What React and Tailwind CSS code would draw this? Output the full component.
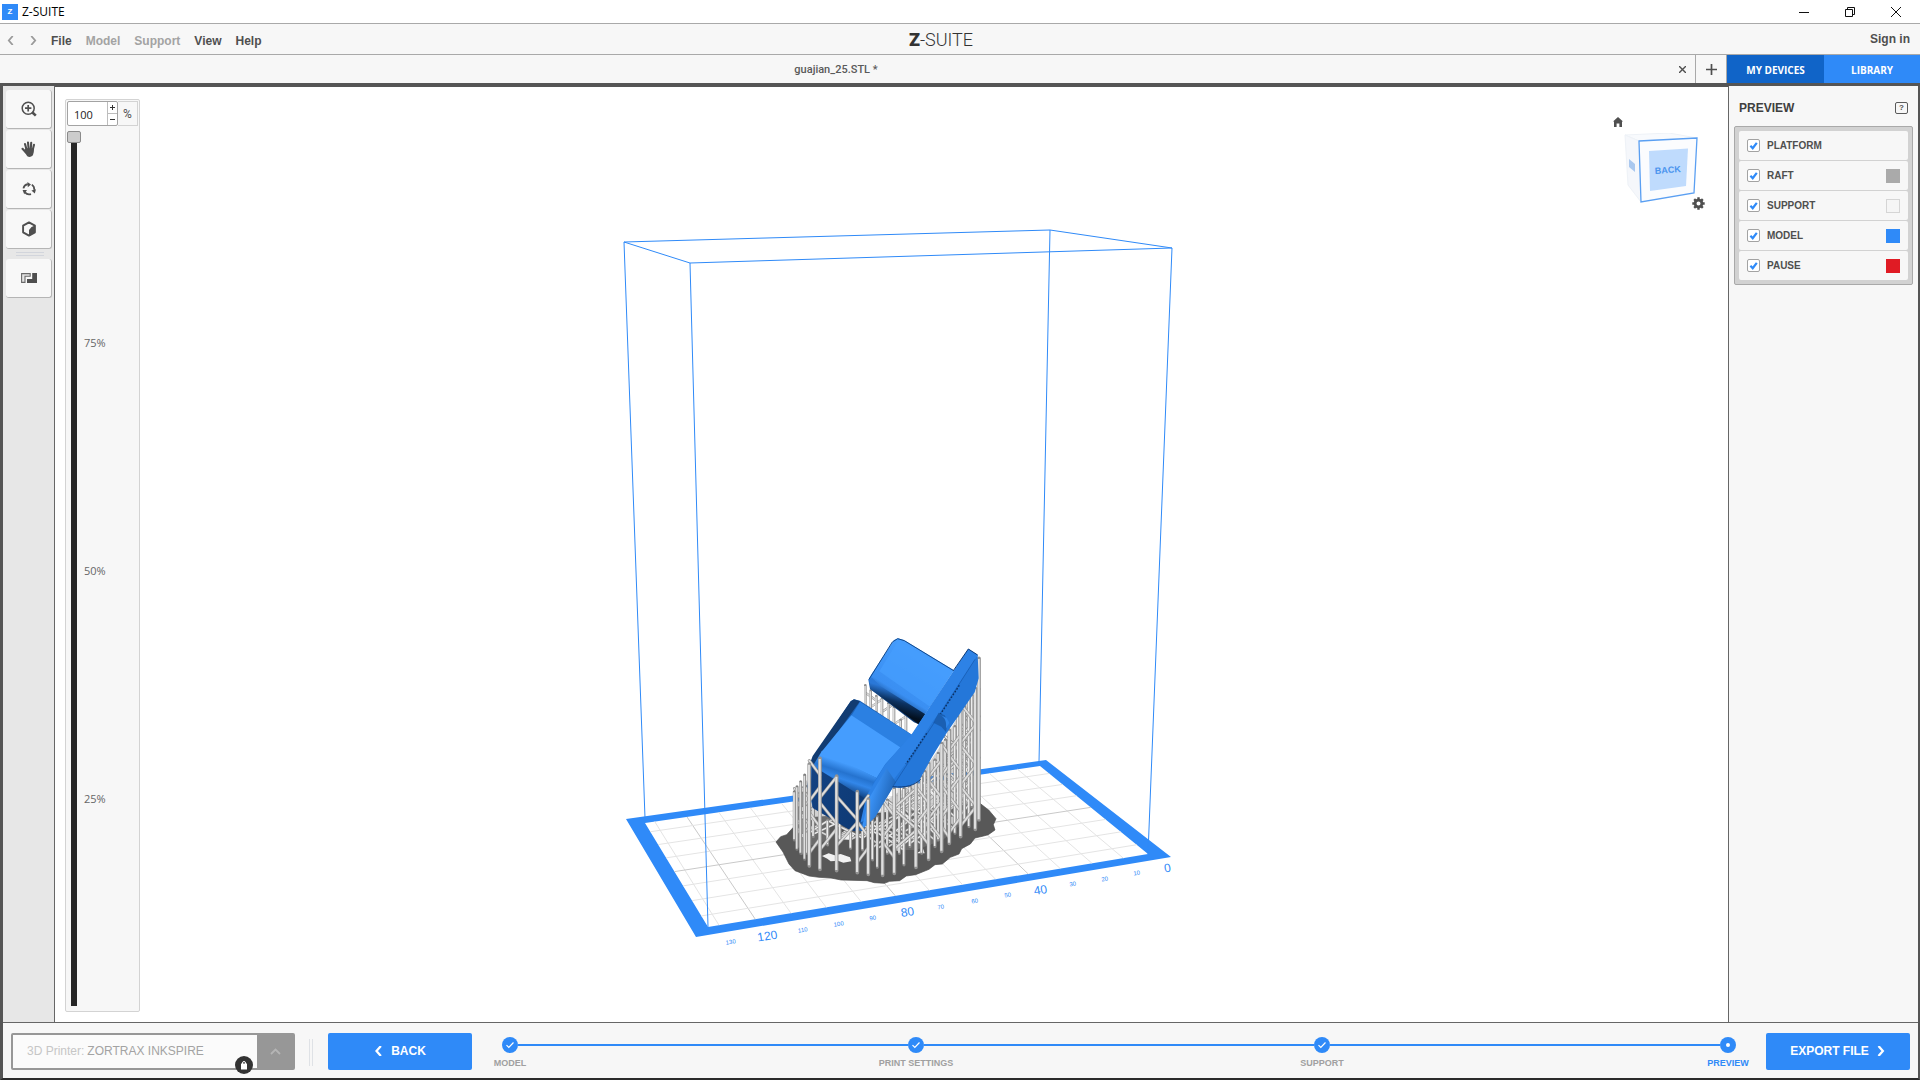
import { useState } from 'react';

const layers = [
  { name: 'PLATFORM', swatch: null },
  { name: 'RAFT', swatch: 'bg-[#aaaaaa] border-[#aaaaaa]' },
  { name: 'SUPPORT', swatch: 'bg-[#f5f5f5] border-[#d5d5d5]' },
  { name: 'MODEL', swatch: 'bg-[#2f8af8] border-[#2f8af8]' },
  { name: 'PAUSE', swatch: 'bg-[#e01b24] border-[#e01b24]' },
];

const steps = ['MODEL', 'PRINT SETTINGS', 'SUPPORT', 'PREVIEW'];

/* ---------- Icons ---------- */

function ZoomIcon() {
  return (
    <svg width="16" height="16" viewBox="0 0 16 16" fill="none" stroke="#4f4f4f">
      <circle cx="7.2" cy="7.2" r="6" strokeWidth="1.5" />
      <path d="M4 7.2h6.4M7.2 4v6.4" strokeWidth="1.7" />
      <path d="M11.2 11.2l3.6 3.4" strokeWidth="2.6" />
    </svg>
  );
}

function HandIcon() {
  return (
    <svg
      width="16"
      height="16"
      viewBox="0 0 16 16"
      fill="none"
      stroke="#4f4f4f"
      strokeLinecap="round"
    >
      <path
        d="M5.4 8L4 3M7.6 7.5L7 1.5M9.8 7.5l.4-5.8M11.8 8.5l1.2-4.8M5 11.5L1.5 7.8"
        strokeWidth="2.1"
      />
      <path
        d="M4.5 7.2h8.4c.2 3-.2 5-1.4 7.6-1.5 1.4-3.8 1.4-5.2.4L2.8 10z"
        fill="#4f4f4f"
        stroke="none"
      />
    </svg>
  );
}

function RotateIcon() {
  return (
    <svg width="14" height="14" viewBox="0 0 14 14" fill="none">
      <g stroke="#4f4f4f" strokeWidth="1.7">
        <path d="M1.4 6.4A5.4 5.4 0 0 1 5.8 2.2" />
        <path d="M9.8 2.6a5.4 5.4 0 0 1 2.4 5.2" />
        <path d="M9 12.1a5.4 5.4 0 0 1-6-1.7" />
      </g>
      <path
        d="M5.4 0l3.6 2.4-3.2 2.8zM14 7.2l-1.2 4.4-3.4-3zM.6 8h4.4L2.2 12.2z"
        fill="#4f4f4f"
      />
    </svg>
  );
}

function CubeIcon() {
  return (
    <svg width="16" height="16" viewBox="0 0 16 16">
      <path
        d="M8 1.4l5.9 3.3v6.6L8 14.6l-5.9-3.3V4.7z"
        fill="none"
        stroke="#4f4f4f"
        strokeWidth="1.9"
        strokeLinejoin="round"
      />
      <path d="M8 9l2.500-3L14 4.600v6.800L8 14.800z" fill="#4f4f4f" />
    </svg>
  );
}

function OutlineIcon() {
  return (
    <svg width="16" height="10" viewBox="0 0 16 10">
      <path
        d="M.6.600h8.600v2.600H4v6.200H.6z"
        fill="#e4e4e4"
        stroke="#6a6a6a"
        strokeWidth="1.100"
      />
      <path d="M16 0v10H6V6h5.200V0z" fill="#4f4f4f" />
    </svg>
  );
}

function Chevron({ d, size = 8, width = 2, color = 'currentColor' }) {
  return (
    <svg width={size} height={size} viewBox="0 0 8 8" fill="none">
      <path d={d} stroke={color} strokeWidth={width} />
    </svg>
  );
}

/* ---------- Header ---------- */

function TitleBar() {
  return (
    <div className="flex h-6 shrink-0 items-center border-b border-[#a9a9a9] bg-white pr-px">
      <span className="ml-[2px] flex h-4 w-4 items-center justify-center bg-[#2f8af8] text-[8px] font-bold text-white">
        Z
      </span>
      <span className="ml-1 flex-1 font-['Open_Sans',sans-serif] text-[12px] leading-4 text-black">
        Z-SUITE
      </span>
      <button aria-label="Minimize" className="flex h-5 w-[46px] items-center justify-center">
        <svg width="10" height="10" stroke="#111">
          <path d="M0 5.5h10" />
        </svg>
      </button>
      <button aria-label="Restore" className="flex h-5 w-[46px] items-center justify-center">
        <svg width="10" height="10" fill="none" stroke="#111">
          <path d="M.5 2.5h7v7h-7zM2.5 2.5v-2h7v7h-2" />
        </svg>
      </button>
      <button aria-label="Close" className="flex h-5 w-[46px] items-center justify-center">
        <svg width="10" height="10" fill="none" stroke="#111">
          <path d="M0 0l10 10M10 0L0 10" />
        </svg>
      </button>
    </div>
  );
}

function MenuBar() {
  return (
    <div className="grid h-[31px] shrink-0 grid-cols-[1fr_auto_1fr] items-center border-b border-[#a9a9a9] bg-[#f7f7f7] pr-[38px] font-bold text-[#4f4f4f]">
      <nav className="flex items-center gap-[14px] pt-[3px] pl-[6px]">
        <button aria-label="Undo">
          <Chevron d="M6 0L2.5 4L6 8" color="#9a9a9a" size={9} width={1.6} />
        </button>
        <button aria-label="Redo" className="-mr-px">
          <Chevron d="M2 0l3.5 4L2 8" color="#9a9a9a" size={9} width={1.6} />
        </button>
        <button>File</button>
        <button className="text-[#a3a3a3]" disabled>
          Model
        </button>
        <button className="text-[#a3a3a3]" disabled>
          Support
        </button>
        <button>View</button>
        <button>Help</button>
      </nav>
      <div className="flex items-center pt-px font-['Roboto',sans-serif] text-[18px] leading-5 text-[#333]">
        <span className="font-black">Z</span>
        <span className="font-light">-SUITE</span>
      </div>
      <a href="#signin" className="-mr-7 justify-self-end">
        Sign in
      </a>
    </div>
  );
}

function TabBar() {
  return (
    <div className="flex h-7 shrink-0 bg-[#f7f7f7]">
      <div className="flex flex-1 items-center">
        <button className="flex-1 pt-px pl-[3px] font-['Roboto',sans-serif] text-[11px] font-medium text-[#5a5a5a]">
          guajian_25.STL *
        </button>
        <button aria-label="Close tab" className="flex w-[26px] justify-center">
          <svg width="7" height="7" viewBox="0 0 7 7" stroke="#4f4f4f" strokeWidth="1.4">
            <path d="M0 0l7 7M7 0L0 7" />
          </svg>
        </button>
      </div>
      <button
        aria-label="New tab"
        className="flex w-8 items-center justify-center border-x border-[#a9a9a9]"
      >
        <svg width="11" height="11" stroke="#4f4f4f" strokeWidth="1.7">
          <path d="M0 5.5h11M5.5 0v11" />
        </svg>
      </button>
      <a
        href="#devices"
        className="flex w-[97px] items-center justify-center bg-[#1064c8] pt-px font-['Open_Sans',sans-serif] text-[10px] font-bold text-white"
      >
        MY DEVICES
      </a>
      <a
        href="#library"
        className="flex w-24 items-center justify-center bg-[#2f8af8] pt-px font-['Open_Sans',sans-serif] text-[10px] font-bold text-white"
      >
        LIBRARY
      </a>
    </div>
  );
}

/* ---------- Left side ---------- */

function ToolButton({ label, children }) {
  return (
    <button
      aria-label={label}
      className="flex h-[39px] w-[46px] items-center justify-center rounded-[3px] border-r border-b border-[#b5b5b5] bg-[#f8f8f8]"
    >
      {children}
    </button>
  );
}

function Toolbar() {
  return (
    <aside className="flex w-[52px] shrink-0 flex-col gap-px border-r border-[#666] bg-[#e7e7e7] pt-1 pl-[3px]">
      <ToolButton label="Zoom">
        <ZoomIcon />
      </ToolButton>
      <ToolButton label="Pan">
        <HandIcon />
      </ToolButton>
      <ToolButton label="Rotate">
        <RotateIcon />
      </ToolButton>
      <ToolButton label="View">
        <CubeIcon />
      </ToolButton>
      <div className="mx-auto my-[2px] h-1 w-7 border-y border-[#d2d5dc]" />
      <ToolButton label="Layers">
        <OutlineIcon />
      </ToolButton>
    </aside>
  );
}

function LayerSlider() {
  const [value, setValue] = useState(100);
  return (
    <div className="relative mt-3 mb-[10px] ml-[10px] flex w-[75px] flex-col rounded-[2px] border border-[#d3d3d3] bg-[#f7f7f7] p-px">
      <div className="flex h-[25px] font-['Roboto',sans-serif] text-[12px] text-[#4f4f4f]">
        <div className="flex w-[51px] rounded-[2px] border border-[#a3a3a3] bg-white">
          <input
            aria-label="Visible layers"
            type="text"
            value={value}
            onChange={(e) => setValue(Number(e.target.value) || 0)}
            className="w-[39px] min-w-0 pt-[2px] pl-[6px] font-['Open_Sans',sans-serif] text-[11px] text-[#222] outline-none"
          />
          <div className="flex w-[10px] flex-col border-l border-[#bdbdbd]">
            <button
              aria-label="Increase"
              className="flex flex-1 items-center justify-center border-b border-[#bdbdbd]"
            >
              <svg width="5" height="5" stroke="#333">
                <path d="M0 2.5h5M2.5 0v5" />
              </svg>
            </button>
            <button aria-label="Decrease" className="flex flex-1 items-center justify-center">
              <svg width="5" height="5" stroke="#333">
                <path d="M0 2.5h5" />
              </svg>
            </button>
          </div>
        </div>
        <span className="flex flex-1 items-center justify-center border border-l-0 border-[#d3d3d3] text-[12px]">
          %
        </span>
      </div>
      <div className="flex min-h-0 flex-1 pt-[5px] pb-1">
        <input
          aria-label="Layer position"
          type="range"
          min="0"
          max="100"
          value={value}
          onChange={(e) => setValue(Number(e.target.value))}
          className="h-full w-[14px] appearance-none bg-[linear-gradient(to_right,transparent_4px,#262626_4px,#262626_10px,transparent_10px)] [direction:rtl] [writing-mode:vertical-lr] [&::-webkit-slider-thumb]:h-[12px] [&::-webkit-slider-thumb]:w-[14px] [&::-webkit-slider-thumb]:appearance-none [&::-webkit-slider-thumb]:rounded-[2px] [&::-webkit-slider-thumb]:border [&::-webkit-slider-thumb]:border-[#8a8a8a] [&::-webkit-slider-thumb]:bg-[#cccccc]"
        />
        <div className="flex flex-1 flex-col justify-between pt-[204px] pb-[199px] pl-[3px] font-['Open_Sans',sans-serif] text-[11px] leading-4 text-[#666]">
          <span>75%</span>
          <span>50%</span>
          <span>25%</span>
        </div>
      </div>
    </div>
  );
}

/* ---------- 3D scene ---------- */

// Inner platform area, in order: front-left, front-right, back-right, back-left
const bed = [
  [708, 927],
  [1148, 854],
  [1040, 766],
  [645, 823],
];

// Perspective mapping of the unit square onto the bed
function project(u, v) {
  const [[x0, y0], [x1, y1], [x2, y2], [x3, y3]] = bed;
  const dx1 = x1 - x2;
  const dx2 = x3 - x2;
  const dx3 = x0 - x1 + x2 - x3;
  const dy1 = y1 - y2;
  const dy2 = y3 - y2;
  const dy3 = y0 - y1 + y2 - y3;
  const det = dx1 * dy2 - dx2 * dy1;
  const g = (dx3 * dy2 - dx2 * dy3) / det;
  const h = (dx1 * dy3 - dx3 * dy1) / det;
  const w = g * u + h * v + 1;
  return [
    ((x1 - x0 + g * x1) * u + (x3 - x0 + h * x3) * v + x0) / w,
    ((y1 - y0 + g * y1) * u + (y3 - y0 + h * y3) * v + y0) / w,
  ];
}

function BedGrid() {
  const lines = [];
  for (let mm = 10; mm <= 130; mm += 10) {
    const u = (133 - mm) / 131;
    lines.push({ a: project(u, 0), b: project(u, 1), major: mm % 40 === 0 });
  }
  for (let mm = 10; mm <= 70; mm += 10) {
    const v = (mm - 3) / 74;
    lines.push({ a: project(0, v), b: project(1, v), major: mm % 40 === 0 });
  }
  return lines.map(({ a, b, major }, i) => (
    <line
      key={i}
      x1={a[0]}
      y1={a[1]}
      x2={b[0]}
      y2={b[1]}
      stroke={major ? '#c9c9c9' : '#e4e4e4'}
    />
  ));
}

const ticks = [
  [1168, 868, '0'],
  [1137, 873, '10'],
  [1105, 879, '20'],
  [1073, 884, '30'],
  [1041, 890, '40'],
  [1008, 895, '50'],
  [975, 901, '60'],
  [941, 907, '70'],
  [908, 912, '80'],
  [873, 918, '90'],
  [839, 924, '100'],
  [803, 930, '110'],
  [768, 936, '120'],
  [731, 942, '130'],
];

// [x, top, bottom]
const gapPoles = [
  [316, 196, 262],
  [332, 212, 272],
  [349, 228, 275],
  [366, 236, 290],
  [385, 250, 300],
  [402, 262, 322],
  [422, 300, 330],
  [438, 275, 345],
];

const backPoles = [
  [112, 560, 680],
  [125, 520, 700],
  [140, 500, 700],
  [160, 560, 650],
  [203, 600, 675],
  [240, 600, 660],
  [272, 600, 685],
  [308, 600, 690],
  [338, 600, 720],
  [352, 590, 742],
  [382, 540, 700],
  [418, 500, 700],
  [432, 505, 735],
  [450, 500, 680],
  [485, 470, 700],
  [495, 455, 660],
  [525, 420, 680],
  [535, 400, 660],
  [556, 360, 640],
  [585, 320, 640],
  [594, 290, 610],
  [614, 260, 600],
  [627, 235, 620],
  [636, 225, 560],
];

const rightPoles = [
  [368, 552, 766],
  [403, 505, 760],
  [468, 486, 742],
  [506, 430, 718],
  [545, 370, 694],
  [568, 330, 670],
  [602, 262, 650],
  [646, 205, 628],
  [657, 115, 600],
];

const leftPoles = [
  [103, 515, 660],
  [111, 500, 688],
  [122, 485, 700],
  [134, 465, 718],
  [148, 432, 738],
];

const frontPoles = [
  [148, 432, 738],
  [180, 415, 748],
  [230, 468, 752],
  [292, 515, 758],
  [325, 537, 763],
];

function zigzag(poles, step, skip) {
  const out = [];
  for (let i = 0; i < poles.length - skip; i++) {
    const [xa, ta, ba] = poles[i];
    const [xb, tb, bb] = poles[i + skip];
    const top = Math.max(ta, tb) - 10 + (i % 3) * 12;
    const bottom = Math.min(ba, bb) - 6;
    const rise = Math.min(step * 0.9, Math.abs(xb - xa) * 1.1 + 8);
    let flip = i % 2 === 0;
    for (let y = top; y + rise < bottom; y += step) {
      out.push(flip ? [xa, y, xb, y + rise] : [xa, y + rise, xb, y]);
      flip = !flip;
    }
  }
  return out;
}

function Rods({ poles, step, skip = 1, width = 11, light = '#dedede', dark = '#929292' }) {
  const braces = zigzag(poles, step, skip).map(([a, b, c, d]) => `M${a} ${b}L${c} ${d}`);
  const posts = poles.map(([x, t, b]) => `M${x} ${t}V${b}`);
  const shine = poles.map(([x, t, b]) => `M${x - 1} ${t + 2}V${b - 2}`);
  return (
    <g fill="none">
      <path d={braces.join('')} stroke={dark} strokeWidth={width * 0.85} strokeLinecap="round" />
      <path d={braces.join('')} stroke={light} strokeWidth={width * 0.5} strokeLinecap="round" />
      <path d={posts.join('')} stroke={dark} strokeWidth={width} strokeLinecap="round" />
      <path d={shine.join('')} stroke={light} strokeWidth={width * 0.6} />
    </g>
  );
}

function PrintedModel() {
  return (
    <g transform="translate(760 620) scale(.33333)">
      {/* Raft */}
      <path
        d="M48 666l14-16 18-6 20-22 60-30 300-20 200-22 18 14 8 6 22 26-8 18 5 16-20 14-14 4-26 6-14 18-26 14-8 16-26 10-24 20-22 2-18 14-40 16-28 4-20 14-30 2-16 6-30-2-22-6-78-2-30-6-36-2-30-4-42-16-18-20-12-24-6-12z"
        fill="#585858"
        stroke="#4a4a4a"
        strokeWidth="2"
      />
      <path
        d="M186 708l20-8 18 6 18-4 28 10 4 12-24 4-16-6-22 2-10-8zM232 648l30-22 22 16-6 18-40-2zM408 682l18-2v10l-16 2zM470 700l20-12 4 12zM560 600l30-20 10 22-22 12z"
        fill="#f2f2f2"
      />

      <Rods poles={gapPoles} step={26} skip={2} width={8} />
      <path
        d="M104 540l36-60 20 80 50 30v60l-40 30-60-20zM380 540l60-40 60-60 60-90 60-110 30 0 8 320-50 50-60 50-80 30-60 0z"
        fill="#8c8c8c"
        opacity=".4"
      />
      <Rods poles={backPoles} step={36} skip={2} width={9} light="#d6d6d6" dark="#747474" />
      <Rods poles={backPoles} step={58} skip={3} width={8} light="#ececec" dark="#8a8a8a" />
      <Rods poles={rightPoles} step={62} />

      {/* Rear block */}
      <path
        d="M402 60l12-5 18 5 150 91-106 162-14-6-132-100-5-28 8-14z"
        fill="url(#rear)"
      />
      <path d="M414 62l166 92-70 106-152-106z" fill="#469dfd" opacity=".75" />
      <path d="M327 178l5 30 144 105 20-30-134-84-26-26z" fill="url(#shadow)" />
      <path
        d="M327 178l70-112 16-10 20 6 148 90"
        fill="none"
        stroke="#12478a"
        strokeWidth="3"
      />

      {/* Front block */}
      <path
        d="M272 244l10-6 18 4 158 104-96 200-56 88-28-8-120-66-16-60 8-72z"
        fill="#1d63b8"
      />
      <path d="M272 244l10-6 18 6-114 158-30 42-6-14 8-22z" fill="#123c72" />
      <path d="M300 246l158 100-30 48-156-104z" fill="#2b80e2" />
      <path d="M274 286l150 98-62 96-178-84z" fill="#459dfe" />
      <path d="M186 392l176 88-36 66-170-104z" fill="url(#bend)" />
      <path d="M156 436l172 108-34 92-24-6-112-66-6-60z" fill="url(#under)" />

      {/* Plate */}
      <path
        d="M625 87l28 18 3 70-12 42-84 122-46 76-36 66-26 16-30 7-24-2-26 42-36 44-6-10 8-86 38-60 80-88z"
        fill="#2477d9"
      />
      <path
        d="M625 87l28 18-112 170-22 28-82 128-42 56-62 100-32 22 18-80 54-92 82-94z"
        fill="#2d82e6"
      />
      <path d="M380 445l28 42-62 104-42 40 22-94z" fill="url(#lip)" />
      <path d="M536 278l18 8 10 20-6 30-14-16-24-12 6-12z" fill="#1a5fb2" />
      <path d="M540 284c16 8 20 22 18 42l10-18-8-14z" fill="#2f86ea" />
      <path
        d="M645 118L540 282M524 306L398 500"
        fill="none"
        stroke="#1558aa"
        strokeWidth="2"
      />
      <path
        d="M598 196l-56 86M500 340l-62 92"
        fill="none"
        stroke="#0b2f60"
        strokeWidth="4"
        strokeDasharray="5 5"
      />
      <path
        d="M398 500c40 4 66-4 84-22M625 87l28 18M625 87L580 152"
        fill="none"
        stroke="#0e3b78"
        strokeWidth="3"
      />

      <Rods poles={leftPoles} step={40} skip={2} width={9} dark="#7e7e7e" />
      <Rods poles={frontPoles} step={78} />
    </g>
  );
}

function Scene() {
  return (
    <svg
      className="absolute inset-0 h-full w-full"
      viewBox="55 87 1673 935"
      role="img"
      aria-label="Print preview"
    >
      <defs>
        <linearGradient id="rear" x1=".75" y1=".2" x2=".35" y2=".85">
          <stop offset="0" stopColor="#469dfd" />
          <stop offset=".75" stopColor="#3a8ff2" />
          <stop offset="1" stopColor="#0c3a75" />
        </linearGradient>
        <linearGradient id="shadow" x1=".6" y1=".3" x2=".45" y2=".75">
          <stop offset="0" stopColor="#2a78d8" />
          <stop offset=".5" stopColor="#0c3261" />
          <stop offset="1" stopColor="#03101f" />
        </linearGradient>
        <linearGradient id="bend" x1=".6" y1=".3" x2=".4" y2=".75">
          <stop offset="0" stopColor="#459dfe" />
          <stop offset=".35" stopColor="#2573cf" />
          <stop offset=".6" stopColor="#3287ea" />
          <stop offset="1" stopColor="#14488a" />
        </linearGradient>
        <linearGradient id="under" x1="0" y1="0" x2="1" y2=".6">
          <stop offset="0" stopColor="#134282" />
          <stop offset="1" stopColor="#0e3a75" />
        </linearGradient>
        <linearGradient id="lip" x1="0" y1="0" x2="1" y2=".5">
          <stop offset="0" stopColor="#2a7ee0" />
          <stop offset=".4" stopColor="#3b93f7" />
          <stop offset="1" stopColor="#1a5cab" />
        </linearGradient>
      </defs>

      {/* Platform */}
      <path
        d="M626 819L1046 760L1171 857L696 937ZM645 823L708 927L1148 854L1040 766Z"
        fill="#2f8af8"
        fillRule="evenodd"
      />
      <BedGrid />
      <g fill="#2f8af8" fontFamily="Liberation Sans, sans-serif" textAnchor="middle">
        {ticks.map(([x, y, label]) => {
          const major = Number(label) % 40 === 0;
          return (
            <text
              key={label}
              fontSize={major ? 12 : 6}
              transform={`translate(${x} ${y + (major ? 4 : 2)}) rotate(-9)`}
            >
              {label}
            </text>
          );
        })}
      </g>

      {/* Build volume */}
      <g fill="none" stroke="#2f8af8" strokeWidth="1">
        <path d="M624 242L1050 230L1172 248L690 263Z" />
        <path d="M624 242L645 818M690 263L708 927M1172 248L1148 854M1050 230L1039 762" />
      </g>

      <PrintedModel />
    </svg>
  );
}

function ViewCube() {
  return (
    <div className="absolute top-[26px] right-[18px] h-[100px] w-[100px]">
      <button aria-label="Home view" className="absolute top-[4px] left-[3px]">
        <svg width="10" height="10" viewBox="0 0 10 10" fill="#4f4f4f">
          <path d="M5 0l5 4.4H9V10H6.4V6.6H3.6V10H1V4.4H0z" />
        </svg>
      </button>
      <svg className="absolute top-5 left-[13px]" width="80" height="74" viewBox="0 0 80 74">
        <path d="M2 2L46 0L74 5L16 8z" fill="#f8fafd" stroke="#eef2f7" />
        <path d="M2 2L16 8L18 69L5 52z" fill="#f5f7fb" stroke="#eef2f7" />
        <path d="M6 26l6 5v8l-6-5z" fill="#a9c8ef" />
        <path d="M16 8L74 5L71 60L18 69z" fill="#fbfcfe" stroke="#5a9ff2" strokeWidth="1.3" />
        <path d="M26 18L65 15.500L63 53L27 58z" fill="#bfdbfd" />
        <text
          transform="translate(45 40) rotate(-4)"
          textAnchor="middle"
          fontSize="9"
          fontWeight="700"
          fontFamily="Liberation Sans, sans-serif"
          fill="#4a94ee"
        >
          BACK
        </text>
      </svg>
      <button aria-label="View settings" className="absolute top-[84px] left-[82px]">
        <svg width="13" height="13" viewBox="-6.500 -6.500 13 13">
          <circle r="3.400" fill="none" stroke="#4f4f4f" strokeWidth="2.800" />
          <path
            d="M0 -6.200V-4M0 6.200V4M-6.200 0H-4M6.200 0H4M-4.300 -4.300L-3 -3M4.300 4.300L3 3M-4.300 4.300L-3 3M4.300 -4.300L3 -3"
            stroke="#4f4f4f"
            strokeWidth="2.400"
          />
        </svg>
      </button>
    </div>
  );
}

/* ---------- Right side ---------- */

function LayerRow({ name, swatch }) {
  return (
    <label className="flex h-[29px] items-center rounded-[2px] bg-[#f7f7f7] px-2">
      <span className="grid h-[13px] w-[13px]">
        <input
          type="checkbox"
          defaultChecked
          className="peer col-start-1 row-start-1 h-[13px] w-[13px] appearance-none rounded-[2px] border border-[#a3a3a3] bg-white"
        />
        <svg
          className="pointer-events-none col-start-1 row-start-1 opacity-0 peer-checked:opacity-100"
          width="13"
          height="13"
          viewBox="0 0 13 13"
          fill="none"
        >
          <path d="M3.400 6.800l2.300 2.400L9.800 3.800" stroke="#2f8af8" strokeWidth="2.200" />
        </svg>
      </span>
      <span className="ml-[7px] flex-1 text-[10px] text-[#4f4f4f]">{name}</span>
      {swatch && <span className={`h-[14px] w-[14px] border ${swatch}`} />}
    </label>
  );
}

function PreviewPanel() {
  return (
    <aside className="w-[190px] shrink-0 border-l border-[#666] bg-[#f7f7f7] px-[5px] font-bold">
      <div className="flex h-10 items-center justify-between pt-[3px] pr-[5px] pl-[5px]">
        <h2 className="text-[#3f3f3f]">PREVIEW</h2>
        <button
          aria-label="Help"
          className="flex h-3 w-[13px] items-center justify-center rounded-[2px] border border-[#5a5a5a] text-[8px] leading-3 text-[#4f4f4f]"
        >
          ?
        </button>
      </div>
      <div className="flex flex-col gap-px rounded-[2px] border border-[#a9a9a9] bg-[#d2d2d2] p-1">
        {layers.map((layer) => (
          <LayerRow key={layer.name} {...layer} />
        ))}
      </div>
    </aside>
  );
}

/* ---------- Footer ---------- */

function PrinterSelect() {
  return (
    <div className="relative flex h-[37px] w-[284px] rounded-[2px] border-2 border-[#979797] bg-[#fbfbfb]">
      <label htmlFor="printer" className="self-center pb-px pl-[14px] text-[#c6c6c6]">
        3D Printer:
      </label>
      <select
        id="printer"
        disabled
        className="min-w-0 flex-1 appearance-none pb-px pl-[3px] text-[#a3a3a3] opacity-100"
      >
        <option>ZORTRAX INKSPIRE</option>
      </select>
      <span className="flex w-9 items-center justify-center bg-[#979797]">
        <svg width="11" height="7" viewBox="0 0 11 7" fill="none">
          <path d="M1 6l4.500-4.500L10 6" stroke="#b5b5b5" strokeWidth="1.800" />
        </svg>
      </span>
      <span className="absolute right-[40px] -bottom-[6px] flex h-[18px] w-[18px] items-center justify-center rounded-full bg-[#333]">
        <svg width="8" height="9" viewBox="0 0 8 9">
          <path d="M2.500 3V2a1.500 1.500 0 0 1 3 0v1" fill="none" stroke="#fff" />
          <path d="M1 2.500h6v6H1z" fill="#fff" />
        </svg>
      </span>
    </div>
  );
}

function Step({ name, active }) {
  return (
    <li className="flex w-4 flex-col items-center gap-1">
      <span className="flex h-4 w-4 items-center justify-center rounded-full bg-[#2f8af8]">
        {active ? (
          <span className="h-1 w-1 rounded-full bg-white" />
        ) : (
          <svg width="8" height="8" viewBox="0 0 8 8" fill="none">
            <path d="M.5 4.200l2.300 2.300L7.500 1.500" stroke="#fff" strokeWidth="1.200" />
          </svg>
        )}
      </span>
      <span
        className={`text-[9px] leading-3 font-bold whitespace-nowrap ${
          active ? 'text-[#2f8af8]' : 'text-[#a0a0a0]'
        }`}
      >
        {name}
      </span>
    </li>
  );
}

function Footer() {
  return (
    <footer className="flex h-14 shrink-0 items-start border-t border-[#666] bg-[#f7f7f7] pt-[10px] pr-2 pl-[8px]">
      <PrinterSelect />
      <div className="mt-[6px] ml-[14px] h-[27px] w-1 border-x border-[#dfe2e6]" />
      <button className="ml-[15px] flex h-[37px] w-36 items-center justify-center gap-[7px] rounded-[2px] bg-[#2f8af8] pb-[2px] font-bold text-white">
        <Chevron d="M5.500 0L2 4L5.500 8" size={10} width={1.8} />
        BACK
      </button>
      <ol className="mt-1 ml-[30px] flex flex-1">
        <Step name={steps[0]} />
        {steps.slice(1).map((name) => (
          <li key={name} className="flex flex-1">
            <span className="mt-[7px] h-[2px] flex-1 bg-[#2f8af8]" />
            <ol>
              <Step name={name} active={name === 'PREVIEW'} />
            </ol>
          </li>
        ))}
      </ol>
      <button className="ml-[30px] flex h-[37px] w-36 items-center justify-center gap-[7px] rounded-[2px] bg-[#2f8af8] pb-[2px] font-bold text-white">
        EXPORT FILE
        <Chevron d="M2 0l3.500 4L2 8" size={10} width={1.8} />
      </button>
    </footer>
  );
}

export default function App() {
  return (
    <div className="flex h-screen flex-col overflow-hidden bg-[#f7f7f7] font-['Liberation_Sans',Arial,sans-serif] text-[12px] leading-4">
      <TitleBar />
      <MenuBar />
      <TabBar />
      <div className="flex min-h-0 flex-1 flex-col border-t-[3px] border-r-2 border-b-2 border-l-[3px] border-[#555] border-b-[#2b2b2b]">
        <div className="flex min-h-0 flex-1">
          <Toolbar />
          <main className="relative flex min-w-0 flex-1 border-t border-[#555] bg-white">
            <Scene />
            <LayerSlider />
            <ViewCube />
          </main>
          <PreviewPanel />
        </div>
        <Footer />
      </div>
    </div>
  );
}
